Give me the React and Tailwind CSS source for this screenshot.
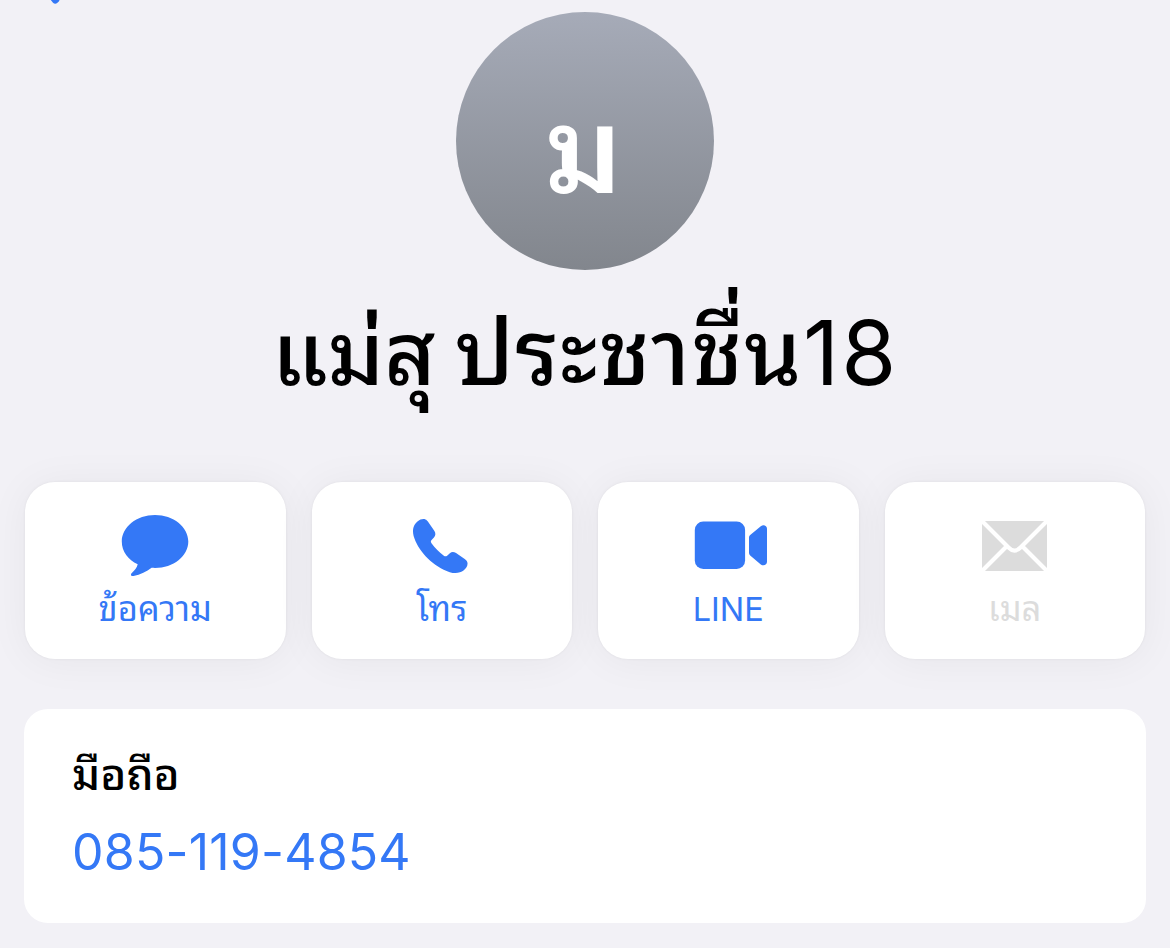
const FONT = "font-['Inter','Noto_Sans_Thai_Looped','Noto_Sans',sans-serif]";

function MessageIcon() {
  return (
    <svg width="80" height="64" viewBox="0 0 80 64" fill="currentColor">
      <path d="M40 3C58.400 3 73.300 14.900 73.300 29.500S58.400 56 40 56c-1.200 0-2.300-.05-3.400-.15C31.500 59.500 25.500 63 18.500 64c-2.800.3-3.200-1.500-1.700-3 2.700-2.600 5.200-5.300 5.900-8.700C13.200 47.800 6.800 39.500 6.800 29.500 6.800 14.900 21.600 3 40 3Z" />
    </svg>
  );
}

function PhoneIcon() {
  return (
    <svg width="80" height="64" viewBox="0.800 -0.200 81.400 65.100" fill="currentColor">
      <path d="M16.500 9.500C19 7.200 22.500 6.500 24.600 7.300c1.200.4 1.900 1.200 2.700 2.400l6.500 9.500c1.500 2.500 1.200 4.600-.5 6.600l-2.400 2.600c-1 1.100-.9 2.100-.1 3.200 3.500 5 8 9.300 12.600 12.700 1.200.8 2.200.8 3.300-.1l2.800-2.500c2-1.700 4.100-1.500 6.300-.1l8.800 6.100c1.800 1.200 2.900 2.700 2.900 4.500 0 2.600-1.600 5.100-3.800 6.900-3.700 3-9 3.500-14.300 1.900C32.900 55.500 18.500 41.200 13.400 26.600 11.100 20 11.300 13.700 16.500 9.500Z" />
    </svg>
  );
}

function VideoIcon() {
  return (
    <svg width="80" height="64" viewBox="0 0 80 64" fill="currentColor">
      <rect x="6.800" y="9.600" width="50.300" height="47.500" rx="8.500" />
      <path d="M61 25.500c0-1 .4-1.700 1.200-2.400l10.600-8.900c2.700-2 6.200-.6 6.200 2.600v33c0 3.200-3.500 4.600-6.200 2.600l-10.600-9c-.8-.7-1.200-1.400-1.200-2.400Z" />
    </svg>
  );
}

function MailIcon() {
  return (
    <svg width="80" height="64" viewBox="0 0 80 64" fill="none">
      <rect x="7" y="9" width="65" height="50" rx="2" fill="currentColor" />
      <path d="M6.500 8.500 33.500 35.500c4.200 4.200 7.800 4.200 12 0L72.500 8.500M6.500 59.500 31.500 34.500M72.500 59.500 47.500 34.500" stroke="white" strokeWidth="4.200" />
    </svg>
  );
}

function Action({ icon, label, disabled, latin }) {
  return (
    <button
      className={`flex h-[177px] flex-col items-center rounded-[30px] bg-white pt-[30px] shadow-[0_0_3px_rgba(0,0,0,0.06),0_2px_42px_rgba(0,0,0,0.05)] ${
        disabled ? "text-[#dcdcdc]" : "text-[#3478f6]"
      }`}
    >
      {icon}
      <span className={`leading-[48px] ${latin ? "mt-[10px] text-[32.500px]" : "mt-[9px] text-[34.500px]"}`}>{label}</span>
    </button>
  );
}

export default function App() {
  return (
    <div className={`flex h-[948px] flex-col overflow-hidden bg-[#f2f1f6] ${FONT}`}>
      <div className="flex h-[12px] shrink-0 items-start pl-[48px]">
        <svg width="12" height="5" viewBox="0 0 12 5">
          <path d="M2-1 5 2.700c1.200 1.300 3 1.300 4.200.3S12 .5 11.500-1Z" fill="#3478f6" />
        </svg>
      </div>

      <div className="mx-auto flex size-[258px] shrink-0 items-center justify-center rounded-full bg-gradient-to-b from-[#a6abb8] to-[#82868d] pt-[18px] pr-[3px] text-[119px] font-semibold leading-none text-white">
        <span>ม</span>
      </div>

      <h1 className="mt-[7px] flex h-[150px] shrink-0 items-baseline justify-center whitespace-pre text-[91px] leading-[150px] text-black">
        <span className="text-[88px] font-medium">แม่สุ</span>
        <span className="ml-[19px] font-medium tracking-[1.200px]">ประชาชื่น</span>
        <span className="text-[89px] tracking-[2px]">18</span>
      </h1>

      <div className="mt-[55px] grid shrink-0 grid-cols-4 gap-[26px] px-[25px]">
        <Action icon={<MessageIcon />} label="ข้อความ" />
        <Action icon={<PhoneIcon />} label="โทร" />
        <Action icon={<VideoIcon />} label="LINE" latin />
        <Action icon={<MailIcon />} label="เมล" disabled />
      </div>

      <div className="mx-[24px] mt-[50px] flex h-[214px] shrink-0 flex-col rounded-[24px] bg-white px-[48px] pt-[27px]">
        <div className="text-[44px] font-medium leading-[76px] text-black">มือถือ</div>
        <div className="mt-[4px] text-[50px] leading-[72px] tracking-[0.200px] text-[#3478f6]">085-119-4854</div>
      </div>
    </div>
  );
}
